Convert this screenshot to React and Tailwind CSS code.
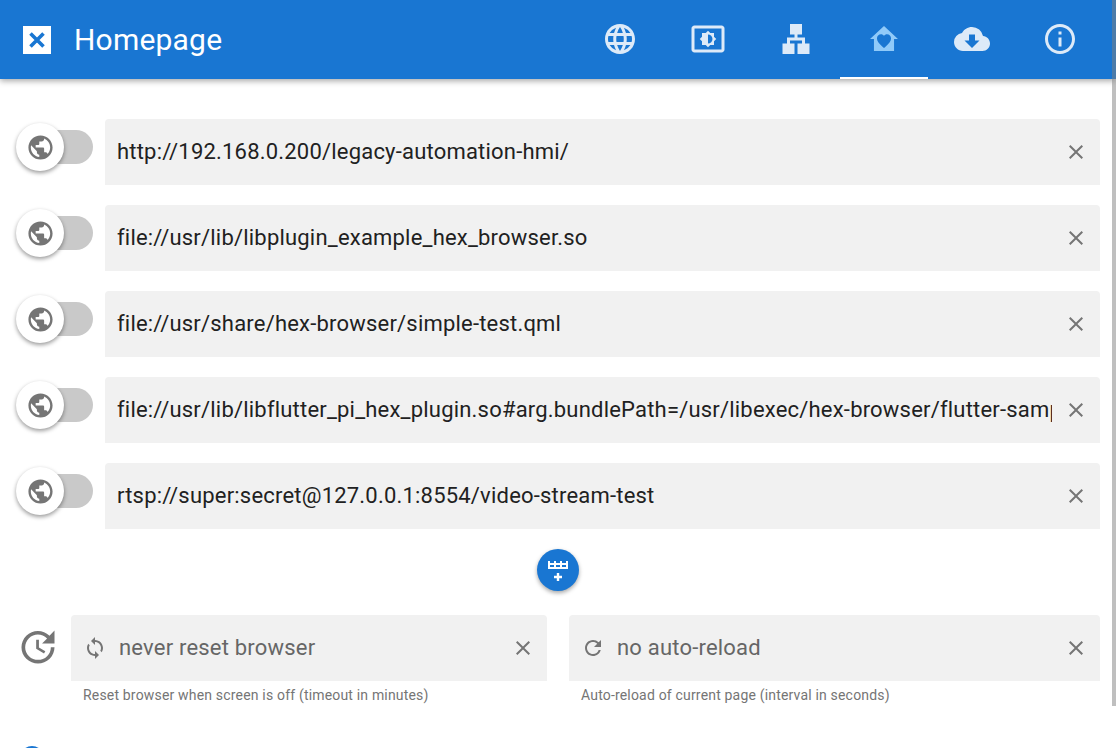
import React from 'react';
import { MdLanguage, MdSettingsBrightness, MdLan, MdCloudDownload, MdInfoOutline, MdPublic, MdClear, MdSync, MdRefresh, MdUpdate } from 'react-icons/md';

const HomeHeart = ({ className }) => (
    <svg viewBox="0 0 24 24" className={className} fill="currentColor">
        <path fillRule="evenodd" d="M12 3.300 2.700 12h2.600v8h13.400v-8h2.600L12 3.300Zm0 14.700-1-.9C8.800 15 7.300 13.500 7.300 11.600 7.300 10 8.500 8.800 10 8.800c.8 0 1.500.4 2 1 .5-.6 1.200-1 2-1 1.500 0 2.700 1.200 2.700 2.800 0 1.900-1.500 3.400-3.700 5.500l-1 .9Z" />
    </svg>
);

const TableRowPlus = ({ className }) => (
    <svg viewBox="0 0 24 24" className={className} fill="currentColor">
        <path fillRule="evenodd" d="M2 3h2v2h4V3h2v2h4V3h2v2h4V3h2v8H2V3Zm2 4v2h4V7H4Zm6 0v2h4V7h-4Zm6 0v2h4V7h-4Z" />
        <path d="M10.800 15h2.400v2.800H16v2.400h-2.800V23h-2.400v-2.800H8v-2.400h2.800V15Z" />
    </svg>
);

const LogoX = ({ className }) => (
    <svg viewBox="0 0 24 24" className={className} fill="none" stroke="currentColor" strokeWidth="3.6">
        <path d="M5.500 5.500 18.500 18.500M18.500 5.500 5.500 18.500" />
    </svg>
);

const tabs = [
    { icon: MdLanguage },
    { icon: MdSettingsBrightness },
    { icon: MdLan },
    { icon: HomeHeart, active: true },
    { icon: MdCloudDownload },
    { icon: MdInfoOutline },
];

const urls = [
    'http://192.168.0.200/legacy-automation-hmi/',
    'file://usr/lib/libplugin_example_hex_browser.so',
    'file://usr/share/hex-browser/simple-test.qml',
    'file://usr/lib/libflutter_pi_hex_plugin.so#arg.bundlePath=/usr/libexec/hex-browser/flutter-sample',
    'rtsp://super:secret@127.0.0.1:8554/video-stream-test',
];

const UrlRow = ({ url }) => (
    <div className="flex h-[66px] mb-5">
        <div className="relative w-[77px] h-[34px] mt-[11px] ml-4 mr-3 shrink-0">
            <div className="absolute right-0 top-0 w-[60px] h-[34px] rounded-full bg-[#c9c9c9]"></div>
            <div className="absolute left-0 top-[-7px] w-12 h-12 rounded-full bg-white shadow-[0_2px_4px_rgba(0,0,0,0.4)] flex items-center justify-center">
                <MdPublic className="w-[29px] h-[29px] text-[#757575]" />
            </div>
        </div>
        <div className="flex-1 min-w-0 h-full flex items-center bg-[#f1f1f1] rounded-t pl-3 pr-3">
            <div className="flex-1 min-w-0 overflow-hidden whitespace-nowrap pb-[2px] text-[22px] tracking-[0.2px] text-[#212121]">{url}</div>
            <MdClear className="w-6 h-6 ml-3 shrink-0 text-[#757575]" />
        </div>
    </div>
);

const DropdownField = ({ icon: Icon, value, hint, className }) => (
    <div className={className}>
        <div className="h-[66px] flex items-center bg-[#f1f1f1] rounded-t pl-3 pr-3">
            <Icon className="w-6 h-6 text-[#757575] shrink-0" />
            <div className="flex-1 ml-3 pb-[2px] text-[22px] tracking-[0.2px] text-[#666666]">{value}</div>
            <MdClear className="w-6 h-6 shrink-0 text-[#757575]" />
        </div>
        <p className="mt-1 px-3 text-[14px] tracking-[0.18px] text-[#757575]">{hint}</p>
    </div>
);

export default function App() {
    return (
        <div className="relative h-[748px] w-full overflow-hidden bg-white font-['Roboto',sans-serif]">
            <header className="relative z-10 h-[79px] bg-[#1976d2] shadow-[0_2px_6px_rgba(0,0,0,0.35)] flex items-center pl-[23px] pr-3">
                <div className="w-7 h-7 bg-white flex items-center justify-center">
                    <LogoX className="w-6 h-6 text-[#1976d2]" />
                </div>
                <h1 className="ml-[23px] text-[30px] tracking-[0.2px] text-white flex-1">Homepage</h1>
                <nav className="flex h-full">
                    {tabs.map((t, i) => (
                        <div key={i} className={t.active ? 'w-[88px] flex items-center justify-center text-[#90caf9] border-b-2 border-white' : 'w-[88px] flex items-center justify-center text-white/85 border-b-2 border-transparent'}>
                            <t.icon className="w-9 h-9" />
                        </div>
                    ))}
                </nav>
            </header>
            {/* overlay scrollbar, runs over the header too */}
            <div className="absolute z-20 right-0 top-0 w-1 h-[706px] bg-[#808080]/50"></div>
            <main className="pt-10">
                <div className="pr-4">
                    {urls.map((u) => <UrlRow key={u} url={u} />)}
                </div>
                <div className="flex justify-center">
                    <button className="w-[42px] h-[42px] rounded-full bg-[#1976d2] text-white flex items-center justify-center shadow-[0_2px_4px_rgba(0,0,0,0.35)]">
                        <TableRowPlus className="w-6 h-6" />
                    </button>
                </div>
                <div className="flex mt-6 pr-4">
                    <div className="w-[71px] h-[66px] shrink-0 flex items-center justify-center pl-[5px] pb-[2px] text-[#757575]">
                        <MdUpdate className="w-11 h-11 shrink-0" />
                    </div>
                    <DropdownField icon={MdSync} value="never reset browser" hint="Reset browser when screen is off (timeout in minutes)" className="w-[476px] shrink-0" />
                    <DropdownField icon={MdRefresh} value="no auto-reload" hint="Auto-reload of current page (interval in seconds)" className="flex-1 ml-[22px]" />
                </div>
                <div className="mt-10 pl-5">
                    <div className="w-6 h-6 rounded-full bg-[#1976d2]"></div>
                </div>
            </main>
        </div>
    );
}
